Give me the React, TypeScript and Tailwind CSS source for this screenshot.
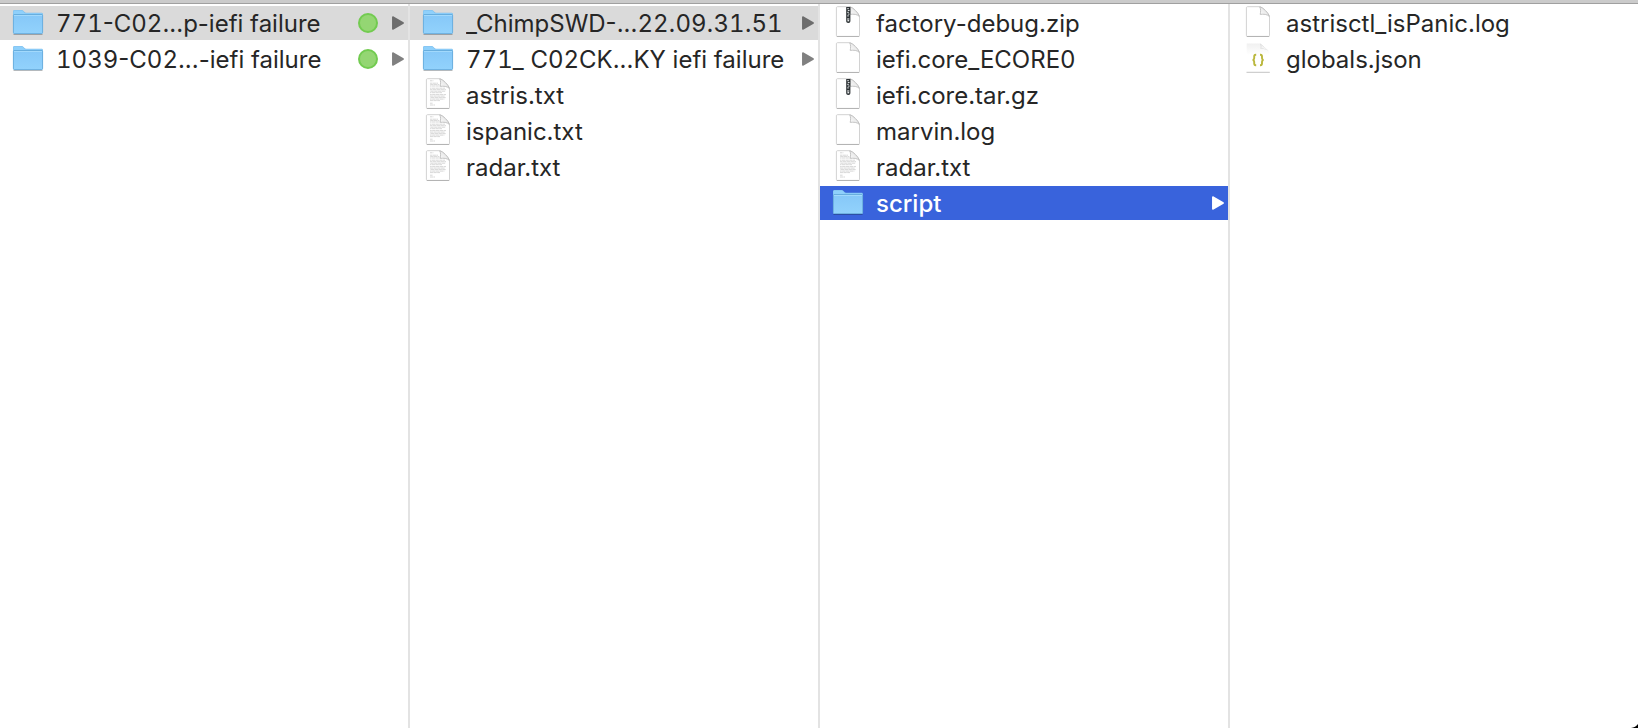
type Kind = "folder" | "text" | "blank" | "zip" | "json";

type Entry = {
  name: string;
  kind: Kind;
  tagged?: boolean;
  state?: "path" | "active";
};

const columns: { label: string; entries: Entry[] }[] = [
  {
    label: "Failures",
    entries: [
      { name: "771-C02...p-iefi failure", kind: "folder", tagged: true, state: "path" },
      { name: "1039-C02...-iefi failure", kind: "folder", tagged: true },
    ],
  },
  {
    label: "Failure contents",
    entries: [
      { name: "_ChimpSWD-...22.09.31.51", kind: "folder", state: "path" },
      { name: "771_ C02CK...KY iefi failure", kind: "folder" },
      { name: "astris.txt", kind: "text" },
      { name: "ispanic.txt", kind: "text" },
      { name: "radar.txt", kind: "text" },
    ],
  },
  {
    label: "Run contents",
    entries: [
      { name: "factory-debug.zip", kind: "zip" },
      { name: "iefi.core_ECORE0", kind: "blank" },
      { name: "iefi.core.tar.gz", kind: "zip" },
      { name: "marvin.log", kind: "blank" },
      { name: "radar.txt", kind: "text" },
      { name: "script", kind: "folder", state: "active" },
    ],
  },
  {
    label: "Script contents",
    entries: [
      { name: "astrisctl_isPanic.log", kind: "blank" },
      { name: "globals.json", kind: "json" },
    ],
  },
];

function Defs() {
  return (
    <svg className="absolute size-0" aria-hidden="true">
      <defs>
        <linearGradient id="folder-front" x1="0" y1="0" x2="0" y2="1">
          <stop offset="0" stopColor="#86c8f8" />
          <stop offset="1" stopColor="#92d2fc" />
        </linearGradient>
        <linearGradient id="fold" x1="0" y1="1" x2="1" y2="0">
          <stop offset="0" stopColor="#ffffff" />
          <stop offset="0.5" stopColor="#ececec" />
          <stop offset="1" stopColor="#ffffff" />
        </linearGradient>
        <linearGradient id="json-sheet" x1="0" y1="0" x2="0" y2="1">
          <stop offset="0" stopColor="#f0f0f0" />
          <stop offset="0.4" stopColor="#ffffff" />
        </linearGradient>
      </defs>
    </svg>
  );
}

function FolderIcon() {
  return (
    <svg viewBox="0 0 32 32" className="size-8 shrink-0" aria-hidden="true">
      <path d="M1.5 28.4h29" stroke="#000" strokeOpacity="0.3" strokeWidth="1" />
      <path d="M1 26V5.6C1 4.7 1.6 4 2.5 4h7.2c.8 0 1.3.3 1.8.9l1 1.1c.4.5.9.7 1.6.7h15.4c.9 0 1.5.6 1.5 1.5V26z" fill="#7fbfec" />
      <path d="M1.4 8V5.8c0-.8.5-1.3 1.2-1.3h7c.7 0 1.1.2 1.6.8l1 1.1c.5.6 1 .8 1.8.8h15.3c.7 0 1.2.5 1.2 1.2V9H1.4z" fill="#8fd0fb" />
      <path d="M1 9h30v17.6c0 .8-.6 1.4-1.4 1.4H2.4c-.8 0-1.4-.6-1.4-1.4z" fill="url(#folder-front)" />
      <path d="M1.5 8.5h29" stroke="#68aede" strokeWidth="1" />
      <path d="M1.5 9.5h29" stroke="#a2d9fc" strokeWidth="1" />
      <path d="M1.4 9v17.4c0 .8.5 1.2 1.2 1.2h26.8c.7 0 1.2-.4 1.2-1.2V9" fill="none" stroke="#62a6d6" strokeWidth="0.8" />
    </svg>
  );
}

const textLines = [
  [2.8, 3.4], [5.2, 8], [6.6, 9.4], [8, 9.8], [10.2, 15], [11.7, 16], [13.2, 15.4], [14.7, 12],
  [16.6, 16], [18.1, 15], [19.6, 16], [21.1, 14.4], [22.6, 10], [25.2, 3], [27, 5],
];

function DocIcon({ kind }: { kind: Kind }) {
  if (kind === "json") {
    return (
      <svg viewBox="0 0 32 32" className="size-8 shrink-0" aria-hidden="true">
        <path d="M4.7 1.4h13.6l9.3 8.4v20.4H4.7z" fill="url(#json-sheet)" />
        <path d="M18 1.2c.9 2.2.9 3.8.5 5.6 3-.3 6.8.5 9.2 3.2L18 1.2z" fill="#d4d4d4" />
        <path d="M19.2 6.5c.3-1.3.2-2.5-.1-3.6 2.7 1.7 4.9 3.5 6.7 5.3-2.2-1.2-4.3-1.7-6.6-1.7z" fill="#f4f4f4" />
        <path d="M4.5 30.3h23.3" stroke="#c4c4c4" strokeWidth="1" />
        <g fill="none" stroke="#bab73c" strokeWidth="1.9">
          <path d="M14.2 12.8h-.5c-1 0-1.5.6-1.5 1.6v1.9c0 1.1-.5 1.6-1.6 1.7 1.1.1 1.6.6 1.6 1.7v1.9c0 1 .5 1.600 1.500 1.600h.5" />
          <path d="M18 12.8h.5c1 0 1.5.6 1.5 1.6v1.9c0 1.1.5 1.600 1.600 1.700-1.100.1-1.600.6-1.600 1.700v1.900c0 1-.5 1.600-1.500 1.600H18" />
        </g>
      </svg>
    );
  }
  return (
    <svg viewBox="0 0 32 32" className="size-8 shrink-0" aria-hidden="true">
      <path
        d="M5.4.7h12.3c3.5.8 8.5 5.8 9.8 9.8v18.9c0 .6-.4 1-1 1H5.4c-.6 0-1-.4-1-1V1.7c0-.6.4-1 1-1z"
        fill="#fff" stroke="#cdcdcd" strokeWidth="0.9"
      />
      <path d="M4.800 30.500h22.400" stroke="#b0b0b0" strokeWidth="0.900" />
      {kind === "text" &&
        textLines.map(([y, w]) => (
          <path
            key={y}
            d={`M8 ${y}h${w}`}
            stroke="#d2d2d2" strokeWidth="0.9" strokeDasharray="3.4 0.4" strokeDashoffset={y * 1.7}
          />
        ))}
      <path
        d="M17.7.8c1.1 2 1.1 4.8.5 7.600 3.200-.5 7.200-.2 9.200 2.100C26.200 6.800 21.300 1.800 17.700.8z"
        fill="url(#fold)" stroke="#bdbdbd" strokeWidth="0.9" strokeLinejoin="round"
      />
      {kind === "zip" && (
        <g>
          <path d="M14.2.9h4.200v14.200c0 1.200-.7 2-2.100 2s-2.100-.8-2.100-2z" fill="#2b3033" />
          <path d="M15.2 2.700h1.700M15.800 4.500h1.700M15.200 6.300h1.700M15.800 8.100h1.700M15.200 9.900h1.700" stroke="#dfe3e4" strokeWidth="1" />
          <path d="M15.4 12h1.800v3.400h-1.800z" fill="#e6e8e9" />
          <path d="M16.3 12.400v1.300" stroke="#33383b" strokeWidth="0.8" />
        </g>
      )}
    </svg>
  );
}

// Digits share one width; punctuation keeps its proportional spacing.
function FileName({ name }: { name: string }) {
  return name.split(/(\d+)/).map((part, i) =>
    i % 2 ? <span key={i} className="tabular-nums">{part}</span> : part
  );
}

const rowStyle = {
  path: "bg-[#dadada] text-[#262626]",
  active: "bg-[#3963dc] text-white font-medium",
  none: "text-[#262626]",
};

const arrowStyle = {
  path: "text-[#6c6c6c]",
  active: "text-white",
  none: "text-[#808080]",
};

function Row({ entry }: { entry: Entry }) {
  const state = entry.state ?? "none";
  return (
    <li>
      <button
        type="button"
        aria-current={entry.state ? "true" : undefined}
        className={`flex h-[34px] w-full items-center pr-1 pl-3 text-left text-2xl ${rowStyle[state]}`}
      >
        <span className="h-[34px] shrink-0">
          {entry.kind === "folder" ? <FolderIcon /> : <DocIcon kind={entry.kind} />}
        </span>
        <span className="ml-3 min-w-0 flex-1 overflow-hidden pt-0.5 whitespace-nowrap">
          <FileName name={entry.name} />
        </span>
        {entry.tagged && (
          <span className="mr-3.5 size-5 shrink-0 rounded-full border-2 border-[#72cb50] bg-[#94d673]" />
        )}
        {entry.kind === "folder" && (
          <svg viewBox="0 0 12 14" className={`h-3.5 w-3 shrink-0 ${arrowStyle[state]}`} aria-hidden="true">
            <path
              d="M.8 1v12L11.2 7z"
              fill="currentColor" stroke="currentColor" strokeWidth="1.5" strokeLinejoin="round"
            />
          </svg>
        )}
      </button>
    </li>
  );
}

export default function App() {
  return (
    <div className="relative flex min-h-screen flex-col overflow-hidden bg-white font-['Inter','Liberation_Sans',sans-serif]">
      <Defs />
      <div className="h-1 shrink-0 border-b border-[#a0a0a0] bg-[#cbcbcb]" />
      <main className="flex flex-1">
        {columns.map((column) => (
          <ul
            key={column.label}
            aria-label={column.label}
            className="flex min-w-0 flex-1 flex-col gap-0.5 border-r-2 border-[#e3e3e3] pt-0.5 last:border-r-0"
          >
            {column.entries.map((entry) => (
              <Row key={entry.name} entry={entry} />
            ))}
          </ul>
        ))}
      </main>
      <svg viewBox="0 0 8 4" className="absolute right-0 bottom-0 h-1 w-2" aria-hidden="true">
        <path d="M8 0v4H1C4 3.6 6.5 2.2 8 0z" fill="#000" />
      </svg>
    </div>
  );
}
